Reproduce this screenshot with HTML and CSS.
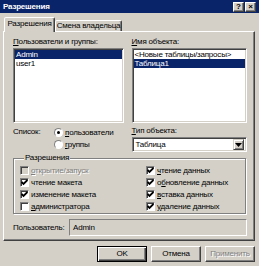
FILE: index.html
```html
<!DOCTYPE html>
<html lang="ru">
<head>
    <meta charset="UTF-8">
    <title>Разрешения</title>
    <link rel="stylesheet" href="styles.css">
</head>
<body>
    <div class="dialog">
        <div class="titlebar">
            <span class="title">Разрешения</span>
            <div class="tbtns">
                <span class="tbtn">?</span>
                <span class="tbtn">&#215;</span>
            </div>
        </div>
        <div class="tabs">
            <div class="tab active">Разрешения</div>
            <div class="tab">Смена владельца</div>
        </div>
        <div class="panel">
            <div class="lists">
                <div class="col colleft">
                    <div class="label"><u>П</u>ользователи и группы:</div>
                    <div class="listbox">
                        <div class="row sel">Admin</div>
                        <div class="row">user1</div>
                    </div>
                </div>
                <div class="col colright">
                    <div class="label"><u>И</u>мя объекта:</div>
                    <div class="listbox">
                        <div class="row">&lt;Новые таблицы/запросы&gt;</div>
                        <div class="row sel">Таблица1</div>
                    </div>
                </div>
            </div>
            <div class="mid">
                <div class="col colleft listtype">
                    <span class="midlabel">Список:</span>
                    <div class="radios">
                        <div class="radio"><span class="dot checked"></span><span><u>п</u>ользователи</span></div>
                        <div class="radio"><span class="dot"></span><span><u>г</u>руппы</span></div>
                    </div>
                </div>
                <div class="col colright">
                    <div class="label"><u>Т</u>ип объекта:</div>
                    <div class="combo">
                        <span>Таблица</span>
                        <span class="dropbtn">
                            <svg width="7" height="4" viewBox="0 0 7 4"><path d="M0 0h7L3.5 4z" fill="#000"/></svg>
                        </span>
                    </div>
                </div>
            </div>
            <fieldset class="group">
                <legend>Разрешения</legend>
                <div class="perms">
                    <div class="check disabled"><span class="box"></span><span><u>о</u>ткрытие/запуск</span></div>
                    <div class="check"><span class="box"><svg class="tick" viewBox="0 0 7 7"><polyline points="0.5,3 2.5,5 6.5,1" fill="none" stroke="#000" stroke-width="1.8"/></svg></span><span><u>ч</u>тение данных</span></div>
                    <div class="check"><span class="box"><svg class="tick" viewBox="0 0 7 7"><polyline points="0.5,3 2.5,5 6.5,1" fill="none" stroke="#000" stroke-width="1.8"/></svg></span><span>чтение макета</span></div>
                    <div class="check"><span class="box"><svg class="tick" viewBox="0 0 7 7"><polyline points="0.5,3 2.5,5 6.5,1" fill="none" stroke="#000" stroke-width="1.8"/></svg></span><span>о<u>б</u>новление данных</span></div>
                    <div class="check"><span class="box"><svg class="tick" viewBox="0 0 7 7"><polyline points="0.5,3 2.5,5 6.5,1" fill="none" stroke="#000" stroke-width="1.8"/></svg></span><span>изменение макета</span></div>
                    <div class="check"><span class="box"><svg class="tick" viewBox="0 0 7 7"><polyline points="0.5,3 2.5,5 6.5,1" fill="none" stroke="#000" stroke-width="1.8"/></svg></span><span><u>в</u>ставка данных</span></div>
                    <div class="check"><span class="box"></span><span><u>а</u>дминистратора</span></div>
                    <div class="check"><span class="box"><svg class="tick" viewBox="0 0 7 7"><polyline points="0.5,3 2.5,5 6.5,1" fill="none" stroke="#000" stroke-width="1.8"/></svg></span><span><u>у</u>даление данных</span></div>
                </div>
            </fieldset>
            <div class="userrow">
                <span class="userlabel">Пользователь:</span>
                <div class="userfield">Admin</div>
            </div>
        </div>
        <div class="buttons">
            <div class="btn default">OK</div>
            <div class="btn">Отмена</div>
            <div class="btn disabled">Применить</div>
        </div>
    </div>
</body>
</html>
```

FILE: styles.css
```css
*{
    margin: 0;
    padding: 0;
    box-sizing: border-box;
}
body{
    font-family: "Liberation Sans", Arial, sans-serif;
    font-size: 8px;
    letter-spacing: -0.2px;
    color: #000;
    background: #d4d0c8;
}
.dialog{
    width: 259px;
    height: 266px;
    background: #d4d0c8;
    display: flex;
    flex-direction: column;
    overflow: hidden;
}
.titlebar{
    height: 13px;
    background: #0a246a;
    color: #fff;
    font-weight: bold;
    display: flex;
    align-items: center;
    justify-content: space-between;
    padding: 0 3px 0 3px;
}
.tbtns{
    display: flex;
    gap: 1px;
}
.tbtn{
    width: 11px;
    height: 10px;
    background: #d4d0c8;
    color: #000;
    border: 1px solid;
    border-color: #fff #404040 #404040 #fff;
    box-shadow: inset -1px -1px #808080;
    font-size: 8px;
    line-height: 8px;
    text-align: center;
    letter-spacing: 0;
}
.tabs{
    display: flex;
    align-items: flex-end;
    height: 14px;
    margin-top: 4px;
    padding-left: 4px;
}
.tab{
    height: 11px;
    width: 67px;
    border: 1px solid;
    border-bottom: none;
    border-color: #fff #404040 transparent #fff;
    border-radius: 2px 2px 0 0;
    box-shadow: inset -1px 0 #808080;
    text-align: center;
    line-height: 10px;
    background: #d4d0c8;
}
.tab.active{
    width: 51px;
    height: 15px;
    margin-bottom: -1px;
    line-height: 12px;
    position: relative;
    z-index: 1;
}
.panel{
    width: 252px;
    height: 210px;
    margin-left: 3px;
    border: 1px solid;
    border-color: #fff #404040 #404040 #fff;
    box-shadow: inset -1px -1px #808080;
    padding: 5px 7px 0 9px;
    display: flex;
    flex-direction: column;
}
.lists, .mid{
    display: flex;
    gap: 8px;
}
.colleft{
    width: 111px;
}
.colright{
    width: 116px;
}
.label{
    height: 10px;
    line-height: 10px;
    margin-bottom: 1px;
}
.listbox{
    height: 75px;
    background: #fff;
    border: 1px solid;
    border-color: #808080 #fff #fff #808080;
    box-shadow: inset 1px 1px #404040, inset -1px -1px #d4d0c8;
    padding: 1px;
}
.row{
    height: 9px;
    line-height: 9px;
    padding-left: 1px;
    white-space: nowrap;
}
.row.sel{
    background: #0a246a;
    color: #fff;
}
.mid{
    margin-top: 3px;
}
.listtype{
    display: flex;
}
.midlabel{
    width: 41px;
    height: 12px;
    line-height: 11px;
}
.radio{
    display: flex;
    align-items: center;
    gap: 2px;
    height: 12px;
}
.dot{
    width: 9px;
    height: 9px;
    border-radius: 50%;
    background: #fff;
    border: 1px solid;
    border-color: #808080 #fff #fff #808080;
    display: flex;
    align-items: center;
    justify-content: center;
}
.dot.checked::after{
    content: "";
    width: 3px;
    height: 3px;
    border-radius: 50%;
    background: #000;
}
.combo{
    margin-top: 1px;
    height: 15px;
    background: #fff;
    border: 1px solid;
    border-color: #808080 #fff #fff #808080;
    box-shadow: inset 1px 1px #404040, inset -1px -1px #d4d0c8;
    display: flex;
    align-items: center;
    justify-content: space-between;
    padding: 2px 2px 2px 3px;
}
.dropbtn{
    width: 11px;
    height: 11px;
    background: #d4d0c8;
    border: 1px solid;
    border-color: #d4d0c8 #404040 #404040 #d4d0c8;
    box-shadow: inset 1px 1px #fff, inset -1px -1px #808080;
    display: flex;
    align-items: center;
    justify-content: center;
}
.group{
    margin-top: 1px;
    border: 1px solid #808080;
    box-shadow: 1px 1px 0 #fff, inset 1px 1px 0 #fff;
    padding: 1px 0 1px 6px;
    width: 233px;
}
.group legend{
    margin-left: 4px;
    padding: 0 1px;
    line-height: 10px;
    background: #d4d0c8;
}
.perms{
    display: grid;
    grid-template-columns: 126px 1fr;
}
.check{
    display: flex;
    align-items: center;
    gap: 2px;
    height: 12px;
    white-space: nowrap;
}
.box{
    width: 9px;
    height: 9px;
    background: #fff;
    border: 1px solid;
    border-color: #808080 #fff #fff #808080;
    box-shadow: inset 1px 1px #404040;
    display: flex;
    align-items: center;
    justify-content: center;
}
.tick{
    width: 7px;
    height: 7px;
    display: block;
}
.check.disabled .box{
    background: #d4d0c8;
}
.check.disabled span:last-child{
    color: #808080;
    text-shadow: 1px 1px #fff;
}
.userrow{
    display: flex;
    align-items: center;
    margin-top: 5px;
}
.userlabel{
    width: 56px;
}
.userfield{
    flex: 1;
    height: 17px;
    line-height: 15px;
    padding-left: 3px;
    border: 1px solid;
    border-color: #808080 #fff #fff #808080;
}
.buttons{
    display: flex;
    justify-content: flex-end;
    gap: 4px;
    padding-right: 4px;
    margin-top: 5px;
}
.btn{
    width: 50px;
    height: 16px;
    border: 1px solid;
    border-color: #fff #404040 #404040 #fff;
    box-shadow: inset -1px -1px #808080;
    text-align: center;
    line-height: 14px;
}
.btn.default{
    border-color: #000;
    box-shadow: inset 1px 1px #fff, inset -1px -1px #404040, inset -2px -2px #808080;
}
.btn.disabled{
    color: #808080;
    text-shadow: 1px 1px #fff;
}
```
